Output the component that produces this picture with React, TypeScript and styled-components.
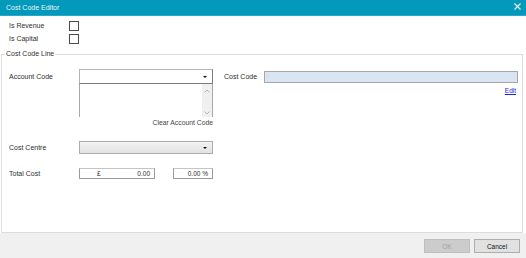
import React from "react";
import styled, { createGlobalStyle } from "styled-components";

const GlobalStyle = createGlobalStyle`
  html, body {
    margin: 0;
    padding: 0;
    background: #ffffff;
  }
  body {
    font-family: "Liberation Sans", Arial, sans-serif;
    font-size: 7px;
    color: #2e2e2e;
  }
`;

const CostCodeEditor: React.FC = () => {
  return (
    <Window>
      <GlobalStyle />
      <TitleBar>
        <Title>Cost Code Editor</Title>
        <CloseButton aria-label="Close">
          <svg width="7" height="7" viewBox="0 0 7 7">
            <path d="M0.5 0.5 L6.5 6.5 M6.5 0.5 L0.5 6.5" stroke="#e8f6fa" strokeWidth="1.2" />
          </svg>
        </CloseButton>
      </TitleBar>

      <Body>
        <CheckRow>
          <RowLabel>Is Revenue</RowLabel>
          <CheckBox />
        </CheckRow>
        <CheckRow>
          <RowLabel>Is Capital</RowLabel>
          <CheckBox />
        </CheckRow>

        <GroupBox>
          <Legend>Cost Code Line</Legend>

          <AccountRow>
            <FieldLabel $height={15}>Account Code</FieldLabel>
            <AccountBlock>
              <Combo>
                <DropArrow />
              </Combo>
              <ListArea>
                <ScrollBar>
                  <Chevron viewBox="0 0 6 4">
                    <path d="M0.5 3.5 L3 1 L5.5 3.5" />
                  </Chevron>
                  <Chevron viewBox="0 0 6 4">
                    <path d="M0.5 0.5 L3 3 L5.5 0.5" />
                  </Chevron>
                </ScrollBar>
              </ListArea>
              <ClearLink>Clear Account Code</ClearLink>
            </AccountBlock>

            <CostCodeLabel>Cost Code</CostCodeLabel>
            <CostCodeBlock>
              <CodeInput>:</CodeInput>
              <EditLink>Edit</EditLink>
            </CostCodeBlock>
          </AccountRow>

          <FormRow>
            <FieldLabel $height={13}>Cost Centre</FieldLabel>
            <CentreCombo>
              <DropArrow />
            </CentreCombo>
          </FormRow>

          <FormRow>
            <FieldLabel $height={12}>Total Cost</FieldLabel>
            <AmountInput $width={76}>
              <Currency>£</Currency>
              <Value>0.00</Value>
            </AmountInput>
            <AmountInput $width={40} $gap={18}>
              <Value>0.00 %</Value>
            </AmountInput>
          </FormRow>
        </GroupBox>
      </Body>

      <Footer>
        <Button disabled>OK</Button>
        <Button>Cancel</Button>
      </Footer>
    </Window>
  );
};

const Window = styled.div`
  width: 526px;
  height: 258px;
  display: flex;
  flex-direction: column;
  background: #ffffff;
`;

const TitleBar = styled.div`
  height: 16px;
  flex: none;
  display: flex;
  align-items: center;
  justify-content: space-between;
  padding: 0 5px 1px 6px;
  box-sizing: border-box;
  background: #0399ba;
  border-bottom: 1px solid #2aa9c6;
`;

const Title = styled.span`
  color: #e9f6f9;
  font-size: 7px;
`;

const CloseButton = styled.span`
  display: flex;
  align-items: center;
  margin-top: -2px;
`;

const Body = styled.div`
  flex: 1;
  display: flex;
  flex-direction: column;
  padding-top: 3px;
`;

const CheckRow = styled.div`
  height: 13px;
  display: flex;
  align-items: center;
  padding-left: 9px;
`;

const RowLabel = styled.span`
  width: 60px;
  font-size: 7px;
`;

const CheckBox = styled.span`
  width: 8px;
  height: 8px;
  border: 1px solid #4a4a4a;
  background: #ffffff;
`;

const GroupBox = styled.fieldset`
  flex: 1;
  min-width: 0;
  margin: 4px 3px 0 1px;
  padding: 0 4px 0 7px;
  border: 1px solid #dcdcdc;
  display: flex;
  flex-direction: column;
`;

const Legend = styled.legend`
  margin-left: -4px;
  padding: 0 1px;
  height: 10px;
  line-height: 10px;
  font-size: 7px;
`;

const AccountRow = styled.div`
  display: flex;
  align-items: flex-start;
  margin-top: 10px;
`;

const FormRow = styled.div`
  display: flex;
  align-items: center;
  margin-top: 13px;
`;

const FieldLabel = styled.span<{ $height: number }>`
  width: 70px;
  flex: none;
  height: ${(p) => p.$height}px;
  display: flex;
  align-items: center;
  font-size: 7px;
`;

const AccountBlock = styled.div`
  width: 134px;
  flex: none;
  display: flex;
  flex-direction: column;
`;

const Combo = styled.div`
  height: 15px;
  box-sizing: border-box;
  border: 1px solid #7a7a7a;
  border-top-color: #b4b4b4;
  border-left-color: #b4b4b4;
  background: #ffffff;
  display: flex;
  align-items: center;
  justify-content: flex-end;
  padding-right: 5px;
`;

const DropArrow = styled.span`
  width: 0;
  height: 0;
  border-left: 2px solid transparent;
  border-right: 2px solid transparent;
  border-top: 2px solid #111111;
`;

const ListArea = styled.div`
  height: 33px;
  border-left: 1px solid #a8a8a8;
  border-right: 1px solid #a8a8a8;
  display: flex;
  justify-content: flex-end;
`;

const ScrollBar = styled.div`
  width: 10px;
  background: #f0f0f0;
  display: flex;
  flex-direction: column;
  justify-content: space-between;
  align-items: center;
  padding: 5px 0 2px;
`;

const Chevron = styled.svg`
  width: 6px;
  height: 4px;
  fill: none;
  stroke: #a6a6a6;
  stroke-width: 0.8;
`;

const ClearLink = styled.span`
  align-self: flex-end;
  height: 10px;
  line-height: 10px;
  margin-top: 1px;
  font-size: 6.8px;
  color: #444444;
`;

const CostCodeLabel = styled.span`
  width: 40px;
  flex: none;
  margin-left: 11px;
  height: 15px;
  display: flex;
  align-items: center;
  font-size: 7px;
`;

const CostCodeBlock = styled.div`
  flex: 1;
  display: flex;
  flex-direction: column;
  padding-top: 2px;
`;

const CodeInput = styled.div`
  height: 12px;
  box-sizing: border-box;
  border: 1px solid #a6a6a6;
  background: #dae5f3;
  padding-left: 2px;
  line-height: 9px;
  font-size: 6px;
  color: #888888;
`;

const EditLink = styled.a`
  align-self: flex-end;
  margin: 3px 2px 0 0;
  height: 9px;
  line-height: 9px;
  font-size: 6.5px;
  color: #1a22d8;
  text-decoration: underline;
`;

const CentreCombo = styled.div`
  width: 134px;
  height: 13px;
  box-sizing: border-box;
  border: 1px solid #acacac;
  background: linear-gradient(#f2f2f2, #e3e3e3);
  display: flex;
  align-items: center;
  justify-content: flex-end;
  padding-right: 5px;
`;

const AmountInput = styled.div<{ $width: number; $gap?: number }>`
  width: ${(p) => p.$width}px;
  height: 11px;
  box-sizing: border-box;
  margin-left: ${(p) => p.$gap ?? 0}px;
  border: 1px solid #9a9a9a;
  border-top-color: #c4c4c4;
  display: flex;
  align-items: center;
  padding-right: 4px;
  font-size: 6.5px;
`;

const Currency = styled.span`
  margin-left: 17px;
`;

const Value = styled.span`
  margin-left: auto;
`;

const Footer = styled.div`
  height: 25px;
  flex: none;
  background: #f0f0f0;
  display: flex;
  justify-content: flex-end;
  align-items: flex-start;
  gap: 4px;
  padding: 6px 6px 0 0;
  box-sizing: border-box;
`;

const Button = styled.button`
  width: 46px;
  height: 14px;
  padding: 0;
  font-family: "Liberation Sans", Arial, sans-serif;
  font-size: 6.5px;
  border: 1px solid #adadad;
  background: #e1e1e1;
  color: #111111;

  &:disabled {
    background: #cccccc;
    border-color: #bfbfbf;
    color: #a3a3a3;
  }
`;

export default CostCodeEditor;
